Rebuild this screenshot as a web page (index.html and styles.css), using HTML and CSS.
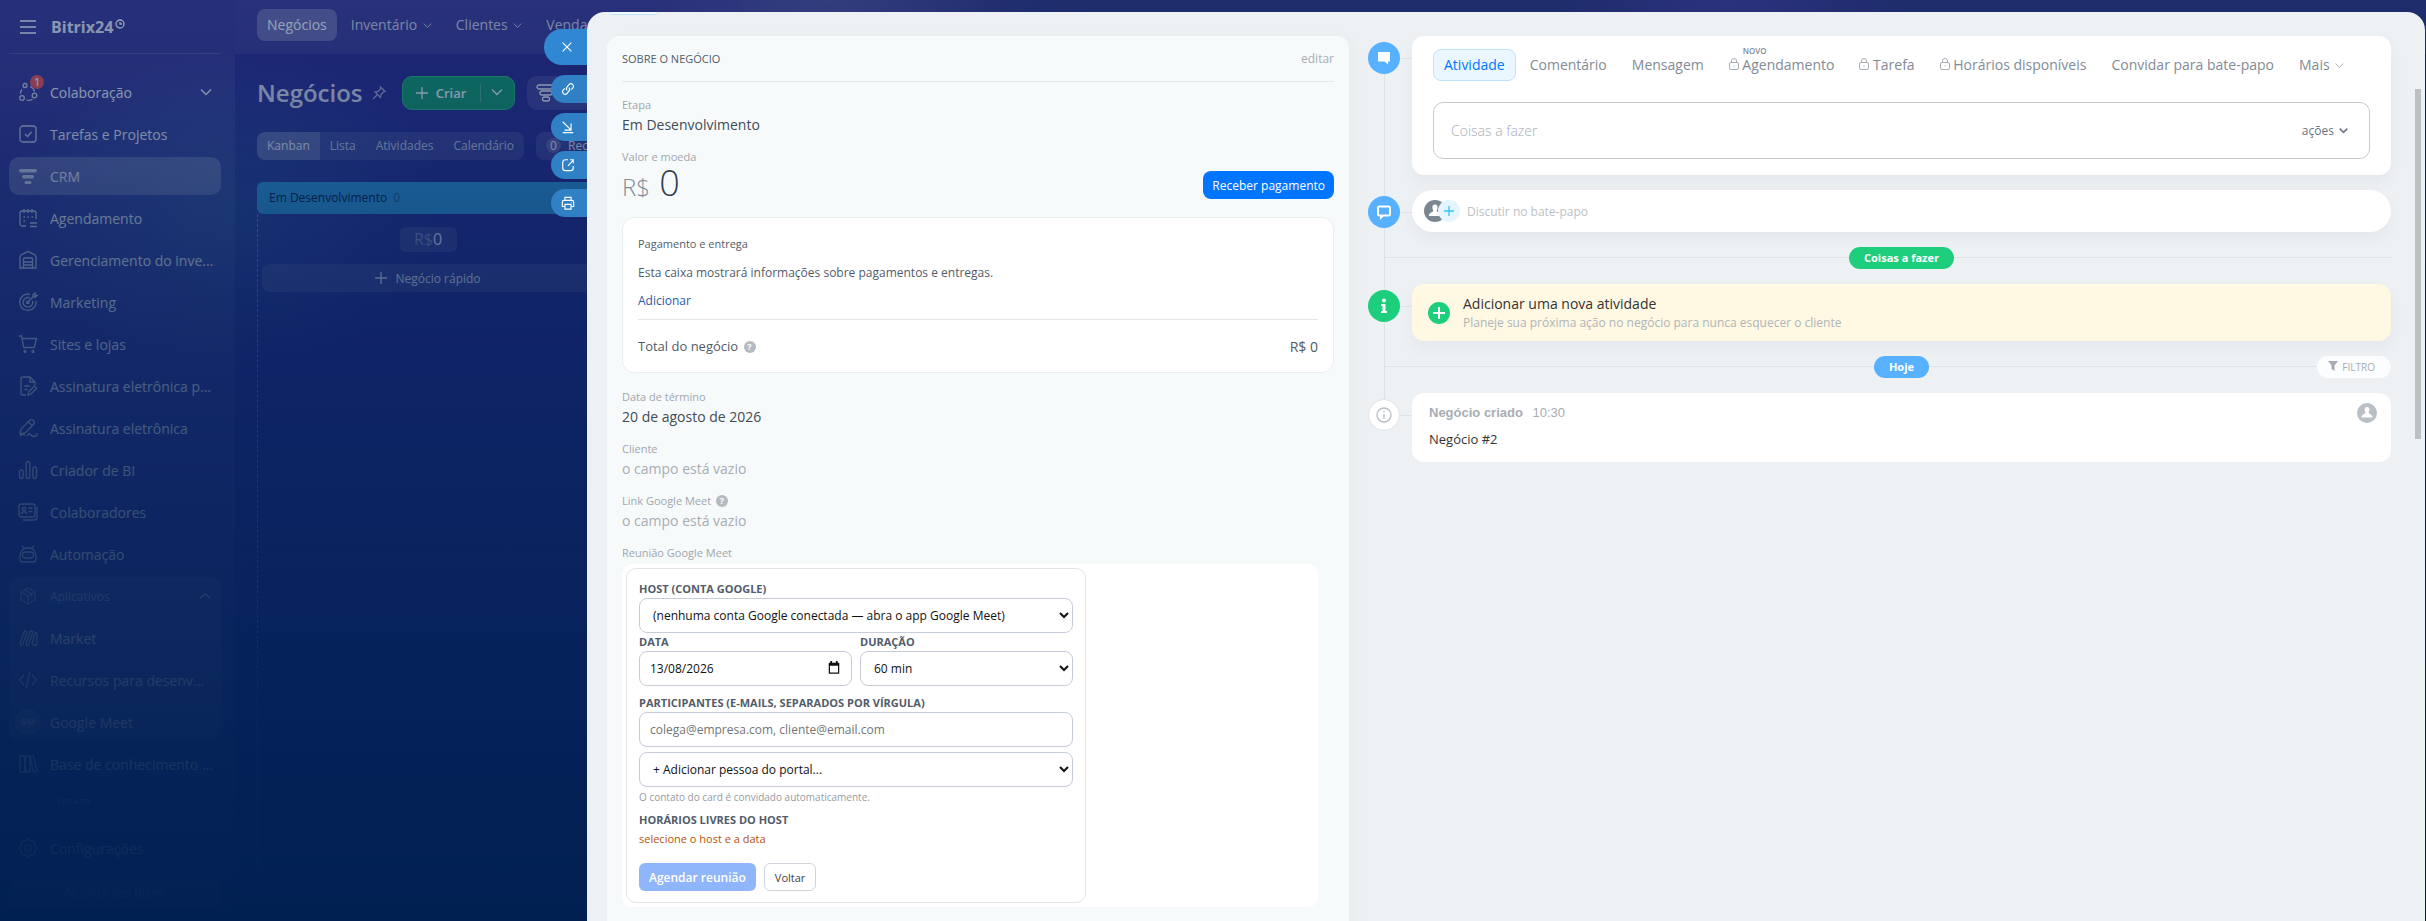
FILE: index.html
```html
<!DOCTYPE html>
<html lang="pt-BR">
<head>
    <meta charset="UTF-8">
    <meta name="viewport" content="width=device-width, initial-scale=1.0">
    <title>Bitrix24</title>
    <link rel="stylesheet" href="styles.css">
</head>
<body>
    <div class="app">
        <aside class="sidebar">
            <div class="brand">
                <svg class="icon" viewBox="0 0 20 20"><path d="M2 4h16M2 10h16M2 16h16"/></svg>
                <span class="brand-name">Bitrix24</span>
                <svg class="brand-clock" viewBox="0 0 10 10"><circle cx="5" cy="5" r="4"/><path d="M5 3v2h2"/></svg>
            </div>
            <nav class="menu">
                <a class="menu-item" href="#">
                    <svg class="icon" viewBox="0 0 20 20"><circle cx="7" cy="3.500" r="2"/><circle cx="4" cy="16" r="2.300"/><circle cx="16.500" cy="13.500" r="2.300"/><path d="M2.500 11.500c0-2 .5-3 1.500-4M8.500 18c2 .6 4 .4 6-.8M12 4.500c2.500 1 4 2.800 4.500 5"/></svg>
                    <span>Colaboração</span>
                    <span class="badge">1</span>
                    <svg class="chevron" viewBox="0 0 12 12"><path d="M1 3.500l5 5 5-5"/></svg>
                </a>
                <a class="menu-item" href="#">
                    <svg class="icon" viewBox="0 0 20 20"><rect x="2" y="2" width="16" height="16" rx="3"/><path d="M7 10l2.500 2.500L13.500 8"/></svg>
                    <span>Tarefas e Projetos</span>
                </a>
                <a class="menu-item active" href="#">
                    <svg class="icon solid" viewBox="0 0 20 20"><rect x="1" y="3" width="18" height="3.600" rx="1.800"/><rect x="4" y="9" width="12" height="3.400" rx="1.700"/><rect x="6.500" y="15" width="7" height="3" rx="1.500"/></svg>
                    <span>CRM</span>
                </a>
                <a class="menu-item" href="#">
                    <svg class="icon" viewBox="0 0 20 20"><path d="M8 18H4a2 2 0 0 1-2-2V5a2 2 0 0 1 2-2h12a2 2 0 0 1 2 2v6M6 1v4M10 1v4M14 1v4M12 15h7M12 18.500h7M5.500 9h1.500M9.500 9h1.500M13.500 9h1.500M5.500 13h1.500"/></svg>
                    <span>Agendamento</span>
                </a>
                <a class="menu-item" href="#">
                    <svg class="icon" viewBox="0 0 20 20"><path d="M2 18V7q0-1.500 1.500-2.300L10 1.500l6.500 3.200Q18 5.500 18 7v11H2zM5.500 18V9q0-1 1-1h7q1 0 1 1v9M5.500 12h9M5.500 15h9"/></svg>
                    <span>Gerenciamento do inve...</span>
                </a>
                <a class="menu-item" href="#">
                    <svg class="icon" viewBox="0 0 20 20"><path d="M12 2.300A8.200 8.200 0 1 0 18 9M12 6a4.800 4.800 0 1 0 2.500 3M9.500 10.500L15 5M15 5V2.500L17 1v2.500h2.200L17.500 5z"/><circle cx="9.800" cy="10.300" r="1.200"/></svg>
                    <span>Marketing</span>
                </a>
                <a class="menu-item" href="#">
                    <svg class="icon" viewBox="0 0 20 20"><path d="M1 2h2.500l2.200 11.500h10.500L18.500 4.500H4"/><circle cx="7" cy="17.500" r="1"/><circle cx="15" cy="17.500" r="1"/></svg>
                    <span>Sites e lojas</span>
                </a>
                <a class="menu-item" href="#">
                    <svg class="icon" viewBox="0 0 20 20"><path d="M8 19H5a2 2 0 0 1-2-2V3a2 2 0 0 1 2-2h7l5 5v3M12 1v5h5M6.500 10h5M6.500 13.500h3M10 19l.5-3 6-6 2.200 2.200-6 6z"/></svg>
                    <span>Assinatura eletrônica p...</span>
                </a>
                <a class="menu-item" href="#">
                    <svg class="icon" viewBox="0 0 20 20"><path d="M2 16l1-5L12 2q2-1 3.500.5T16 6l-9 9zM2 18c3-3 5-3 4 0M9 18c2-3 3-3 4-1s4 2 6 0v-2M10.500 4l3.500 3.500"/></svg>
                    <span>Assinatura eletrônica</span>
                </a>
                <a class="menu-item" href="#">
                    <svg class="icon" viewBox="0 0 20 20"><rect x="1.500" y="10" width="3.600" height="8.500" rx="1.800"/><rect x="8.200" y="1.500" width="3.600" height="17" rx="1.800"/><rect x="14.900" y="7" width="3.600" height="11.500" rx="1.800"/></svg>
                    <span>Criador de BI</span>
                </a>
                <a class="menu-item" href="#">
                    <svg class="icon" viewBox="0 0 20 20"><rect x="1" y="2" width="16" height="13" rx="2"/><path d="M19 5v10q0 3-3 3H5"/><circle cx="6" cy="7" r="1.700"/><path d="M3 12c1-3 5-3 6 0M10.500 6h4M10.500 9.500h4"/></svg>
                    <span>Colaboradores</span>
                </a>
                <a class="menu-item" href="#">
                    <svg class="icon" viewBox="0 0 20 20"><path d="M4 1.500L6 4.500M16 1.500l-2 3M2 12c0-11 16-11 16 0v3q0 3-3 3H5q-3 0-3-3z"/><rect x="4.500" y="8" width="11" height="6" rx="3"/><path d="M8 11h.5M11.500 11h.5"/></svg>
                    <span>Automação</span>
                </a>
                <div class="menu-group">
                    <a class="menu-item muted" href="#">
                        <svg class="icon" viewBox="0 0 20 20"><path d="M10 2l7 4v8l-7 4-7-4V6zM3 6l7 4 7-4M10 10v8M6.500 4l7 4v3"/></svg>
                        <span>Aplicativos</span>
                        <svg class="chevron" viewBox="0 0 12 12"><path d="M1 8.500l5-5 5 5"/></svg>
                    </a>
                    <a class="menu-item" href="#">
                        <svg class="icon" viewBox="0 0 20 20"><path d="M2 16L6 4q1-2 3 0L5 16q-2 3-3 0M8 16l4-12q1-2 3 0l-4 12q-2 3-3 0M14 16l3-11q2-1 2 1v10q-1 3-5 0"/></svg>
                        <span>Market</span>
                    </a>
                    <a class="menu-item" href="#">
                        <svg class="icon" viewBox="0 0 20 20"><path d="M6 5l-4.500 5L6 15M14 5l4.500 5-4.500 5M12 1.500l-4 17"/></svg>
                        <span>Recursos para desenv...</span>
                    </a>
                    <a class="menu-item" href="#">
                        <span class="initials">GM</span>
                        <span>Google Meet</span>
                    </a>
                </div>
                <a class="menu-item" href="#">
                    <svg class="icon" viewBox="0 0 20 20"><rect x="2" y="2" width="5" height="16" rx="1"/><rect x="7" y="2" width="5" height="16" rx="1"/><path d="M12 3l3.500-.8L19 17l-3.500 1z"/></svg>
                    <span>Base de conhecimento ...</span>
                </a>
                <div class="menu-hidden"><span>OCULTO</span></div>
                <a class="menu-item" href="#">
                    <svg class="icon" viewBox="0 0 20 20"><circle cx="10" cy="10" r="3.500"/><path d="M10 1l2.500 2.200 3.500-.4.400 3.500L19 10l-2.600 3.500-.4 3.500-3.500-.3L10 19l-2.500-2.300-3.500.3-.4-3.500L1 10l2.600-3.700.4-3.500 3.500.4z"/></svg>
                    <span>Configurações</span>
                </a>
                <a class="upgrade" href="#">Atualize seu plano</a>
            </nav>
        </aside>

        <main class="main">
            <nav class="topbar">
                <a class="topbar-item active" href="#">Negócios</a>
                <a class="topbar-item" href="#">Inventário <svg class="chevron small" viewBox="0 0 12 12"><path d="M1 3.500l5 5 5-5"/></svg></a>
                <a class="topbar-item" href="#">Clientes <svg class="chevron small" viewBox="0 0 12 12"><path d="M1 3.500l5 5 5-5"/></svg></a>
                <a class="topbar-item" href="#">Vendas</a>
            </nav>
            <div class="title-row">
                <h1>Negócios</h1>
                <svg class="pin" viewBox="0 0 14 14"><path d="M8.500 1l4.500 4.500-1.500.5-2.500 2.500-.5 3L3 6l3-.5L8.500 3zM5.500 8.500L1 13"/></svg>
                <div class="create">
                    <button class="create-main" type="button"><svg class="plus" viewBox="0 0 12 12"><path d="M6 0v12M0 6h12"/></svg> Criar</button>
                    <button class="create-more" type="button" aria-label="Criar"><svg class="chevron" viewBox="0 0 12 12"><path d="M1 3.500l5 5 5-5"/></svg></button>
                </div>
                <div class="funnel">
                    <svg class="icon" viewBox="0 0 20 20"><rect x="1" y="2" width="18" height="4" rx="2"/><rect x="4" y="8" width="12" height="4" rx="2"/><rect x="6.500" y="14" width="7" height="4" rx="2"/></svg>
                </div>
            </div>
            <div class="view-row">
                <div class="views">
                    <a class="view active" href="#">Kanban</a>
                    <a class="view" href="#">Lista</a>
                    <a class="view" href="#">Atividades</a>
                    <a class="view" href="#">Calendário</a>
                </div>
                <div class="counter"><span class="counter-value">0</span> Rec</div>
            </div>
            <section class="column">
                <h2>Em Desenvolvimento <span>0</span></h2>
                <div class="column-body">
                    <div class="sum"><span>R$</span>0</div>
                    <button class="quick" type="button"><svg class="plus" viewBox="0 0 12 12"><path d="M6 0v12M0 6h12"/></svg> Negócio rápido</button>
                </div>
            </section>
        </main>
    </div>
    <div class="backdrop"></div>

    <div class="slider-tools">
        <button class="tool tool-close" type="button" aria-label="Fechar"><svg viewBox="0 0 16 16"><path d="M3 3l10 10M13 3L3 13"/></svg></button>
        <button class="tool" type="button" aria-label="Link"><svg viewBox="0 0 16 16"><path d="M7 9.500a3 3 0 0 1 0-4l2.500-3a3 3 0 0 1 4.300 4l-2 2.200M9 6.500a3 3 0 0 1 0 4l-2.500 3a3 3 0 0 1-4.300-4l2-2.200"/></svg></button>
        <button class="tool" type="button" aria-label="Minimizar"><svg viewBox="0 0 16 16"><path d="M2 2l9.500 9.500M11.500 4v7.500H4M2 14.500h12"/></svg></button>
        <button class="tool" type="button" aria-label="Abrir"><svg viewBox="0 0 16 16"><path d="M8 2H5Q2 2 2 5v6.500q0 3 3 3h6q3 0 3-3V9M8 9l6-6.500M10.500 2H14v4"/></svg></button>
        <button class="tool" type="button" aria-label="Imprimir"><svg viewBox="0 0 16 16"><path d="M4.500 5V1.500h7V5M4 12H1.500V7q0-2 2-2h9q2 0 2 2v5H12M4.500 9.500h7v5.500h-7zM11.500 7.200h.8"/></svg></button>
    </div>

    <div class="slider">
        <div class="slider-edge"></div>

        <section class="deal">
            <header class="deal-header">
                <h2>SOBRE O NEGÓCIO</h2>
                <a href="#">editar</a>
            </header>

            <div class="field">
                <div class="field-label">Etapa</div>
                <div class="field-value">Em Desenvolvimento</div>
            </div>
            <div class="field-label">Valor e moeda</div>
            <div class="amount-row">
                <div class="amount"><span>R$</span> 0</div>
                <button class="pay" type="button">Receber pagamento</button>
            </div>

            <div class="payment">
                <div class="payment-title">Pagamento e entrega</div>
                <p>Esta caixa mostrará informações sobre pagamentos e entregas.</p>
                <a href="#">Adicionar</a>
                <div class="payment-total">
                    <span>Total do negócio <i class="help">?</i></span>
                    <span class="total-value">R$ 0</span>
                </div>
            </div>

            <div class="field">
                <div class="field-label">Data de término</div>
                <div class="field-value">20 de agosto de 2026</div>
            </div>
            <div class="field">
                <div class="field-label">Cliente</div>
                <div class="field-value empty">o campo está vazio</div>
            </div>
            <div class="field">
                <div class="field-label">Link Google Meet <i class="help">?</i></div>
                <div class="field-value empty">o campo está vazio</div>
            </div>
            <div class="field-label">Reunião Google Meet</div>

            <div class="meet">
                <form class="meet-form">
                    <label for="host">HOST (CONTA GOOGLE)</label>
                    <select id="host"><option>(nenhuma conta Google conectada — abra o app Google Meet)</option></select>
                    <div class="meet-columns">
                        <div>
                            <label for="date">DATA</label>
                            <div class="date-box">
                                <input id="date" type="text" value="13/08/2026">
                                <svg viewBox="0 0 12 14"><path d="M1 3h10v10H1z"/><path class="solid" d="M.5 2h11v3H.5zM2 0h2v3H2zM8 0h2v3H8z"/></svg>
                            </div>
                        </div>
                        <div>
                            <label for="duration">DURAÇÃO</label>
                            <select id="duration"><option>60 min</option></select>
                        </div>
                    </div>
                    <label for="guests">PARTICIPANTES (E-MAILS, SEPARADOS POR VÍRGULA)</label>
                    <input id="guests" type="text" placeholder="colega@empresa.com, cliente@email.com">
                    <select class="person" aria-label="Adicionar pessoa"><option>+ Adicionar pessoa do portal...</option></select>
                    <div class="hint">O contato do card é convidado automaticamente.</div>
                    <div class="slots-title">HORÁRIOS LIVRES DO HOST</div>
                    <div class="slots-note">selecione o host e a data</div>
                    <div class="actions">
                        <button class="submit" type="button" disabled>Agendar reunião</button>
                        <button class="back" type="button">Voltar</button>
                    </div>
                </form>
            </div>
        </section>

        <section class="timeline">
            <div class="entry">
                <span class="dot blue"><svg viewBox="0 0 16 16"><path class="solid" d="M2 2h12v9.500h-2V14.500L8.500 11.500H2z"/></svg></span>
                <div class="card composer">
                    <nav class="tabs">
                        <a class="tab active" href="#">Atividade</a>
                        <a class="tab" href="#">Comentário</a>
                        <a class="tab" href="#">Mensagem</a>
                        <a class="tab" href="#"><svg class="lock" viewBox="0 0 10 12"><rect x=".5" y="4.500" width="9" height="7" rx="1.500"/><path d="M2.500 4.500V3a2.500 2.500 0 0 1 5 0v1.500M5 7.500v1"/></svg> Agendamento<span class="new">NOVO</span></a>
                        <a class="tab" href="#"><svg class="lock" viewBox="0 0 10 12"><rect x=".5" y="4.500" width="9" height="7" rx="1.500"/><path d="M2.500 4.500V3a2.500 2.500 0 0 1 5 0v1.500M5 7.500v1"/></svg> Tarefa</a>
                        <a class="tab" href="#"><svg class="lock" viewBox="0 0 10 12"><rect x=".5" y="4.500" width="9" height="7" rx="1.500"/><path d="M2.500 4.500V3a2.500 2.500 0 0 1 5 0v1.500M5 7.500v1"/></svg> Horários disponíveis</a>
                        <a class="tab" href="#">Convidar para bate-papo</a>
                        <a class="tab" href="#">Mais <svg class="chevron small" viewBox="0 0 12 12"><path d="M1 3.500l5 5 5-5"/></svg></a>
                    </nav>
                    <div class="todo-box">
                        <input type="text" placeholder="Coisas a fazer" aria-label="Coisas a fazer">
                        <button type="button">ações <svg class="chevron small" viewBox="0 0 12 12"><path d="M1 3.500l5 5 5-5"/></svg></button>
                    </div>
                </div>
            </div>

            <div class="entry">
                <span class="dot blue"><svg viewBox="0 0 16 16"><path class="outline" d="M3.500 2.500h9q1.500 0 1.500 1.500v6q0 1.500-1.500 1.500H7L5 13.500v-2H3.500Q2 11.500 2 10V4q0-1.500 1.500-1.500z"/></svg></span>
                <div class="card chat">
                    <svg class="avatar" viewBox="0 0 22 22"><circle cx="11" cy="11" r="11"/><path d="M11 4.500c2 0 2.800 1.400 2.600 3.300-.1 1.400-.6 2.400-1 3 .2 1.500 4.200 1.400 4.600 5.200H4.800c.4-3.800 4.400-3.700 4.600-5.200-.4-.6-.9-1.600-1-3C8.200 5.900 9 4.500 11 4.500z"/></svg>
                    <span class="add-user"><svg class="plus" viewBox="0 0 12 12"><path d="M6 1v10M1 6h10"/></svg></span>
                    <span>Discutir no bate-papo</span>
                </div>
            </div>

            <div class="separator">
                <span class="pill green">Coisas a fazer</span>
            </div>

            <div class="entry">
                <span class="dot green"><svg viewBox="0 0 16 16"><circle class="solid" cx="8" cy="2.500" r="2"/><path class="solid" d="M5 6h4.500v7H11v2H5v-2h1.500V8H5z"/></svg></span>
                <div class="card next">
                    <span class="add"><svg class="plus" viewBox="0 0 12 12"><path d="M6 0v12M0 6h12"/></svg></span>
                    <div>
                        <div class="next-title">Adicionar uma nova atividade</div>
                        <div class="next-text">Planeje sua próxima ação no negócio para nunca esquecer o cliente</div>
                    </div>
                </div>
            </div>

            <div class="separator">
                <span class="pill blue">Hoje</span>
                <button class="filter" type="button"><svg viewBox="0 0 10 10"><path d="M0 0h10L6.500 4.500V10l-3-2V4.500z"/></svg> FILTRO</button>
            </div>

            <div class="entry last">
                <span class="dot plain"><svg viewBox="0 0 16 16"><circle cx="8" cy="8" r="7"/><path d="M8 7v5M8 4v1.500"/></svg></span>
                <div class="card created">
                    <div>
                        <div class="created-head"><b>Negócio criado</b> <time>10:30</time></div>
                        <div class="created-text">Negócio #2</div>
                    </div>
                    <svg class="avatar light" viewBox="0 0 22 22"><circle cx="11" cy="11" r="11"/><path d="M11 4.500c2 0 2.800 1.400 2.600 3.300-.1 1.400-.6 2.400-1 3 .2 1.500 4.200 1.400 4.600 5.200H4.800c.4-3.800 4.400-3.700 4.600-5.200-.4-.6-.9-1.600-1-3C8.200 5.900 9 4.500 11 4.500z"/></svg>
                </div>
            </div>
        </section>
        <div class="scroll-thumb"></div>
    </div>
</body>
</html>
```
FILE: styles.css
```css
* {
    margin: 0;
    padding: 0;
    box-sizing: border-box;
}

body {
    font-family: "Open Sans", "Noto Sans", sans-serif;
    font-size: 14px;
    height: 100vh;
    overflow: hidden;
    position: relative;
}

a {
    color: inherit;
    text-decoration: none;
}

button,
input,
select {
    font-family: inherit;
    font-size: 12px;
}

button {
    border: none;
    background: none;
    color: inherit;
    cursor: pointer;
}

svg {
    flex: none;
    fill: none;
    stroke: currentColor;
    stroke-width: 1.3;
}

.icon {
    width: 20px;
    height: 20px;
}

.solid {
    fill: currentColor;
    stroke: none;
}

.chevron {
    width: 12px;
    height: 12px;
}

.chevron.small {
    width: 9px;
    height: 9px;
    margin-left: 2px;
}

.plus {
    width: 12px;
    height: 12px;
}

/* Portal behind the slider */
.app {
    display: flex;
    height: 100%;
    overflow: hidden;
    color: white;
    background:
        radial-gradient(ellipse 180px 60px at 830px 0, rgba(255,255,255,0.12), transparent),
        radial-gradient(ellipse 180px 60px at 1730px 0, rgba(90,60,200,0.4), transparent),
        radial-gradient(ellipse 220px 160px at 230px 210px, rgba(60,130,180,0.35), transparent),
        linear-gradient(90deg, transparent 700px, rgba(16,30,90,0.5) 1100px),
        linear-gradient(#322c8e, #302f9a 40%, #2b3ea0);
}

.sidebar {
    flex: none;
    width: 235px;
    padding: 0 14px 0 9px;
    background: rgba(255,255,255,0.07);
}

.brand {
    display: flex;
    align-items: center;
    height: 54px;
    padding-left: 9px;
    border-bottom: 1px solid rgba(255,255,255,0.15);
    margin-bottom: 19px;
}

.brand-name {
    font-size: 16px;
    font-weight: 700;
    line-height: 20px;
    margin: 0 2px 0 13px;
    opacity: 0.9;
}

.brand-clock {
    width: 10px;
    height: 10px;
    margin-bottom: 6px;
}

.menu-item {
    position: relative;
    display: flex;
    align-items: center;
    gap: 12px;
    height: 38px;
    margin-bottom: 4px;
    padding: 0 9px;
    border-radius: 10px;
    white-space: nowrap;
}

.menu-item.active {
    background: rgba(255,255,255,0.25);
}

.menu-item .icon {
    opacity: 0.8;
}

.menu-item .chevron {
    margin-left: auto;
}

.menu-item.muted {
    opacity: 0.6;
}

.menu-item.muted .chevron {
    margin-right: 1px;
}

.menu-group .muted span {
    font-size: 12px;
}

.badge {
    position: absolute;
    left: 21px;
    top: 2px;
    width: 14px;
    height: 14px;
    border-radius: 7px;
    background: #ff5752;
    font-size: 10px;
    font-weight: 600;
    line-height: 14px;
    text-align: center;
}

.menu-group {
    padding-bottom: 1px;
    margin-bottom: 3px;
    border-radius: 10px;
    background: rgba(255,255,255,0.1);
}

.menu-group .menu-item:last-child {
    margin-bottom: 0;
}

.initials {
    width: 26px;
    height: 26px;
    margin: 0 -3px;
    border-radius: 13px;
    background: rgba(255,255,255,0.2);
    font-size: 9px;
    font-weight: 700;
    line-height: 26px;
    text-align: center;
    color: rgba(255,255,255,0.6);
}

.menu-hidden {
    display: flex;
    align-items: center;
    gap: 8px;
    height: 26px;
    margin-bottom: 16px;
    font-size: 8px;
    opacity: 0.6;
}

.menu-hidden::before,
.menu-hidden::after {
    content: "";
    flex: 1;
    height: 1px;
    background: rgba(255,255,255,0.3);
}

.menu-hidden::after {
    flex: 3;
}

.upgrade {
    display: block;
    height: 28px;
    margin-top: 12px;
    border-radius: 8px;
    background: rgba(255,255,255,0.2);
    font-size: 12px;
    line-height: 28px;
    text-align: center;
}

.main {
    flex: 1;
    min-width: 0;
}

.topbar {
    display: flex;
    align-items: center;
    gap: 4px;
    height: 54px;
    padding: 0 22px 4px;
    background: rgba(255,255,255,0.08);
}

.topbar-item {
    padding: 0 10px;
    border-radius: 8px;
    line-height: 32px;
    opacity: 0.75;
    white-space: nowrap;
}

.topbar-item.active {
    background: rgba(255,255,255,0.25);
    opacity: 1;
}

.title-row {
    display: flex;
    align-items: center;
    padding: 22px 22px;
}

.title-row h1 {
    font-size: 24px;
    font-weight: 600;
    line-height: 34px;
    opacity: 0.85;
}

.pin {
    width: 14px;
    height: 14px;
    margin: 0 16px 0 9px;
    opacity: 0.6;
}

.create {
    display: flex;
    height: 34px;
    border: 1px solid #2fc27a;
    border-radius: 10px;
    background: #1aa06d;
}

.create-main {
    width: 77px;
    display: flex;
    align-items: center;
    justify-content: center;
    gap: 8px;
    font-size: 13px;
    font-weight: 600;
}

.create-more {
    width: 34px;
    margin: 7px 0;
    border-left: 1px solid rgba(255,255,255,0.25);
}

.funnel {
    display: flex;
    align-items: center;
    width: 300px;
    height: 34px;
    margin-left: 12px;
    padding-left: 9px;
    border-radius: 10px;
    background: rgba(255,255,255,0.12);
}

.view-row {
    display: flex;
    gap: 12px;
    padding: 0 22px;
    margin-bottom: 22px;
    font-size: 12px;
    line-height: 28px;
}

.views {
    display: flex;
    overflow: hidden;
    border-radius: 8px;
    background: rgba(255,255,255,0.12);
}

.view {
    padding: 0 10px;
    opacity: 0.75;
}

.view.active {
    background: rgba(255,255,255,0.2);
    opacity: 1;
}

.counter {
    width: 300px;
    padding-left: 10px;
    border-radius: 8px;
    background: rgba(255,255,255,0.12);
}

.counter-value {
    display: inline-block;
    width: 15px;
    margin-right: 4px;
    border-radius: 8px;
    background: rgba(255,255,255,0.2);
    line-height: 15px;
    text-align: center;
}

.column {
    width: 341px;
    margin-left: 22px;
}

.column h2 {
    padding-left: 12px;
    border-radius: 6px 0 0 6px;
    background: #39a9e8;
    color: #0b1b3c;
    font-size: 12px;
    font-weight: 400;
    line-height: 32px;
}

.column h2 span {
    margin-left: 3px;
    opacity: 0.5;
}

.column-body {
    height: 720px;
    padding: 13px 4px;
    border-left: 1px dashed rgba(255,255,255,0.4);
}

.sum {
    width: 57px;
    margin: 0 auto 12px;
    border-radius: 6px;
    background: rgba(255,255,255,0.12);
    font-size: 16px;
    line-height: 25px;
    text-align: center;
}

.sum span {
    opacity: 0.4;
}

.quick {
    display: flex;
    align-items: center;
    justify-content: center;
    gap: 8px;
    width: 100%;
    height: 28px;
    border-radius: 8px;
    background: rgba(255,255,255,0.12);
}

/* Shade that gets solid towards the bottom */
.backdrop {
    position: absolute;
    inset: 0;
    background: linear-gradient(rgba(0,31,80,0.4), rgba(0,31,80,0.46) 10%, rgba(0,31,80,0.57) 20%, rgba(0,31,80,0.69) 37%, rgba(0,31,80,0.79) 56%, rgba(0,31,80,0.87) 74%, rgba(0,31,80,0.94) 92%, rgba(0,31,80,0.98));
}

/* Slider */
.slider-tools {
    position: absolute;
    top: 29px;
    left: 544px;
    width: 43px;
    display: flex;
    flex-direction: column;
    align-items: flex-end;
    gap: 10px;
}

.tool {
    width: 36px;
    height: 28px;
    padding-right: 2px;
    border-radius: 14px 0 0 14px;
    background: #3080c6;
    color: white;
}

.tool-close {
    width: 43px;
    height: 36px;
    border-radius: 18px 0 0 18px;
    background: #3088d2;
    padding-left: 5px;
}

.tool svg {
    display: block;
    width: 14px;
    height: 14px;
    margin: 0 auto;
}

.slider {
    position: absolute;
    top: 12px;
    left: 587px;
    right: 1px;
    bottom: 0;
    display: grid;
    grid-template-columns: 742fr 1023fr;
    gap: 19px;
    padding: 24px 34px 0 20px;
    overflow: hidden;
    border-radius: 18px 18px 0 0;
    background: #edf1f4;
    color: #333;
}

.slider-edge {
    position: absolute;
    top: -12px;
    left: 21px;
    width: 52px;
    height: 15px;
    border: 1px solid #b9e2fa;
    border-radius: 6px;
    background: #f4fbff;
}

.scroll-thumb {
    position: absolute;
    top: 77px;
    right: 4px;
    width: 6px;
    height: 350px;
    background: #bbc0c3;
}

/* Deal card */
.deal {
    min-height: 1000px;
    padding: 0 15px;
    border-radius: 12px 12px 0 0;
    background: #f6fafb;
    box-shadow: 6px 0 14px rgba(0,0,0,0.02);
}

.deal-header {
    display: flex;
    align-items: center;
    justify-content: space-between;
    height: 46px;
    margin-bottom: 14px;
    border-bottom: 1px solid #e4e8ea;
    color: #a8adb4;
    font-size: 12px;
}

.deal-header h2 {
    color: #525c69;
    font-size: 11px;
    font-weight: 400;
}

.field {
    margin-bottom: 12px;
}

.field-label {
    color: #a0a6ae;
    font-size: 11px;
    line-height: 18px;
}

.field-value {
    color: #434b55;
    font-size: 14px;
    line-height: 22px;
}

.field-value.empty {
    color: #a8adb4;
}

.help {
    display: inline-block;
    width: 12px;
    height: 12px;
    margin-left: 2px;
    border-radius: 6px;
    background: #b6bbc1;
    color: white;
    font-size: 9px;
    font-style: normal;
    font-weight: 700;
    line-height: 12px;
    text-align: center;
    vertical-align: 1px;
}

.amount-row {
    display: flex;
    align-items: center;
    justify-content: space-between;
    height: 38px;
    margin-bottom: 13px;
}

.amount {
    font-size: 36px;
    font-weight: 300;
    line-height: 38px;
    color: #333f4d;
}

.amount span {
    font-size: 24px;
    color: #828b95;
}

.pay {
    height: 28px;
    padding: 0 9px;
    border-radius: 8px;
    background: #0075ff;
    color: white;
    font-size: 12px;
    font-weight: 500;
}

.payment {
    padding: 17px 15px 0;
    margin-bottom: 15px;
    border: 1px solid #eaeef0;
    border-radius: 12px;
    background: white;
    color: #525c69;
    font-size: 12px;
}

.payment-title {
    font-size: 11px;
    line-height: 18px;
    margin-bottom: 10px;
}

.payment p {
    line-height: 20px;
    margin-bottom: 8px;
}

.payment a {
    display: block;
    color: #2a5ba8;
    line-height: 20px;
}

.payment-total {
    display: flex;
    align-items: center;
    justify-content: space-between;
    height: 53px;
    margin-top: 8px;
    border-top: 1px solid #e4e8ea;
    font-size: 13px;
}

.total-value {
    font-size: 14px;
}

.meet {
    margin: 2px 16px 0 0;
    padding: 4px;
    border-radius: 10px;
    background: white;
}

.meet-form {
    width: 460px;
    padding: 11px 12px;
    border: 1px solid #e2e5e8;
    border-radius: 10px;
}

.meet-form label,
.slots-title {
    display: block;
    color: #525c69;
    font-size: 11px;
    font-weight: 700;
    line-height: 18px;
}

.meet-form select,
.meet-form input {
    display: block;
    width: 100%;
    height: 35px;
    padding: 0 10px;
    border: 1px solid #c6cdd9;
    border-radius: 8px;
    background: white;
    color: #111;
    font-size: 12px;
}

.meet-form select {
    padding: 0 0 0 9px;
}

.meet-columns {
    display: grid;
    grid-template-columns: 1fr 1fr;
    gap: 8px;
    margin-bottom: 8px;
}

.date-box {
    position: relative;
}

.date-box svg {
    position: absolute;
    right: 12px;
    top: 10px;
    width: 12px;
    height: 13px;
    color: #111;
}

.meet-form .person {
    margin-top: 5px;
}

.hint {
    color: #959ca4;
    font-size: 10px;
    line-height: 18px;
    margin: 1px 0 5px;
}

.slots-note {
    color: #b45309;
    font-size: 11px;
    line-height: 20px;
    margin-bottom: 14px;
}

.actions {
    display: flex;
    gap: 8px;
}

.actions button {
    height: 28px;
    padding: 0 10px;
    border-radius: 6px;
}

.actions .submit {
    background: #8fb5fb;
    color: white;
    font-size: 12px;
    font-weight: 600;
}

.actions .back {
    border: 1px solid #cfd4da;
    color: #444;
    font-size: 11px;
}

/* Timeline */
.timeline {
    display: flex;
    flex-direction: column;
    gap: 15px;
}

.entry {
    position: relative;
    display: flex;
    gap: 12px;
}

/* rail that runs down to the next entry */
.entry::before,
.separator::before {
    content: "";
    position: absolute;
    left: 16px;
    top: 6px;
    bottom: -21px;
    width: 1px;
    background: #dfe3e6;
}

.entry.last::before {
    display: none;
}

.entry::after {
    content: "";
    position: absolute;
    left: 32px;
    top: 22px;
    width: 12px;
    height: 1px;
    background: #dfe3e6;
}

.dot {
    position: relative;
    flex: none;
    display: flex;
    align-items: center;
    justify-content: center;
    width: 32px;
    height: 32px;
    margin-top: 6px;
    border-radius: 50%;
    color: white;
}

.dot svg {
    width: 16px;
    height: 16px;
}

.dot .outline {
    stroke-width: 2;
}

.dot.plain {
    border: 1px solid #dfe3e6;
    background: white;
    color: #b8bdc4;
}

.blue {
    background: #58b1ff;
}

.green {
    background: #1dcf7c;
}

.card {
    flex: 1;
    min-width: 0;
    border-radius: 12px;
    background: white;
    box-shadow: 0 6px 14px rgba(82,92,105,0.06);
}

.composer {
    padding: 13px 21px 16px;
}

.tabs {
    display: flex;
    gap: 3px;
    margin-bottom: 21px;
    color: #828b95;
}

.tab {
    position: relative;
    padding: 0 10px;
    border: 1px solid transparent;
    border-radius: 8px;
    line-height: 30px;
    white-space: nowrap;
}

.tab.active {
    border-color: #bfe3fb;
    background: #ebf7ff;
    color: #0075ff;
}

.tab .chevron {
    opacity: 0.7;
}

.lock {
    width: 10px;
    height: 12px;
    stroke-width: 1;
    opacity: 0.7;
}

.new {
    position: absolute;
    left: 24px;
    top: -4px;
    font-size: 8px;
    font-weight: 600;
    line-height: 10px;
}

.todo-box {
    display: flex;
    align-items: center;
    height: 57px;
    padding: 0 21px 0 17px;
    border: 1px solid #c8cbce;
    border-radius: 10px;
}

.todo-box input {
    flex: 1;
    border: none;
    outline: none;
    font-size: 14px;
    font-weight: 300;
}

.todo-box input::placeholder {
    color: #a8adb4;
}

.todo-box button {
    color: #6a737f;
}

.todo-box .chevron {
    stroke-width: 2;
}

.chat {
    display: flex;
    align-items: center;
    height: 42px;
    padding-left: 12px;
    border-radius: 21px;
    color: #bdc1c6;
    font-size: 12px;
}

.avatar {
    width: 22px;
    height: 22px;
    fill: white;
    stroke: none;
}

.avatar circle {
    fill: #7b8691;
}

.avatar.light {
    width: 20px;
    height: 20px;
}

.avatar.light circle {
    fill: #b9bfc5;
}

.add-user {
    position: relative;
    display: flex;
    align-items: center;
    justify-content: center;
    width: 22px;
    height: 22px;
    margin: 0 7px 0 -8px;
    border-radius: 11px;
    background: #e5f4ff;
    color: #2fc6f6;
}

.separator {
    position: relative;
    display: grid;
    grid-template-columns: 1fr auto 1fr;
    height: 22px;
    padding-left: 44px;
}

.separator::after {
    content: "";
    position: absolute;
    left: 16px;
    right: 0;
    top: 10px;
    height: 1px;
    background: #dfe3e6;
}

.pill {
    grid-column: 2;
    position: relative;
    z-index: 1;
    padding: 0 15px;
    border-radius: 11px;
    color: white;
    font-size: 11px;
    font-weight: 700;
    line-height: 22px;
}

.filter {
    position: relative;
    z-index: 1;
    justify-self: end;
    padding: 0 16px 0 11px;
    border-radius: 11px;
    background: #fbfdfe;
    color: #a8adb4;
    font-size: 10px;
}

.filter svg {
    width: 10px;
    height: 10px;
    margin-right: 2px;
    fill: currentColor;
    stroke: none;
}

.next {
    display: flex;
    align-items: center;
    gap: 13px;
    height: 57px;
    padding-left: 16px;
    background: #fff8e2;
}

.add {
    display: flex;
    align-items: center;
    justify-content: center;
    width: 22px;
    height: 22px;
    border-radius: 11px;
    background: #1dcf7c;
    color: white;
}

.add .plus {
    stroke-width: 2;
}

.next-title {
    line-height: 20px;
}

.next-text {
    color: #b0b5ba;
    font-size: 12px;
    line-height: 18px;
}

.created {
    display: flex;
    justify-content: space-between;
    align-items: flex-start;
    height: 69px;
    padding: 10px 14px 0 17px;
    box-shadow: none;
}

.created-head {
    color: #a8adb4;
    font-family: "Liberation Sans", sans-serif;
    font-size: 13px;
    line-height: 20px;
}

.created-head time {
    margin-left: 6px;
}

.created-text {
    font-size: 13px;
    line-height: 20px;
    margin-top: 6px;
}
```
